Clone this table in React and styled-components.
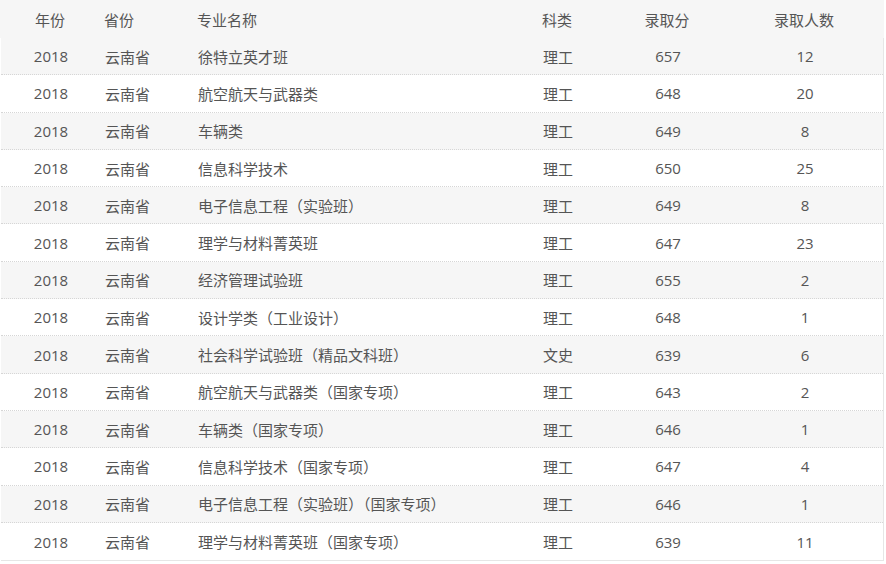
import React from "react";
import styled, { createGlobalStyle } from "styled-components";

const Global = createGlobalStyle`
  html, body { margin: 0; padding: 0; background: #fff; }
  body { font-family: "Open Sans", "Noto Sans CJK SC", sans-serif; }
`;

const Table = styled.div`
  width: 884px;
  font-size: 15px;
  color: #555;
`;

const cols = "100px 93px 345px 72px 114px 160px";

const Header = styled.div`
  display: grid;
  grid-template-columns: ${cols};
  height: 38px;
  align-items: center;
  background: #f6f6f6;
  color: #555;
`;

const Body = styled.div`
  border-left: 1px solid #e6e6e6;
  border-right: 1px solid #e6e6e6;
  border-bottom: 1px solid #e6e6e6;
  margin-left: 1px;
`;

const Row = styled.div`
  display: grid;
  grid-template-columns: ${cols};
  height: 37.3px;
  box-sizing: border-box;
  align-items: center;
  background: ${(p) => (p.$odd ? "#f6f6f6" : "#fff")};
  border-bottom: ${(p) => (p.$last ? "none" : "1px dotted #d6d6d6")};
  margin-left: -1px;
`;

const Cell = styled.div`
  text-align: ${(p) => p.$align || "left"};
  padding-left: ${(p) => (p.$align === "center" ? 0 : 4)}px;
  white-space: nowrap;
`;

const headers = [
  ["年份", "center"],
  ["省份", "left"],
  ["专业名称", "left"],
  ["科类", "left"],
  ["录取分", "center"],
  ["录取人数", "center"],
];

const data = [
  ["徐特立英才班", "理工", 657, 12],
  ["航空航天与武器类", "理工", 648, 20],
  ["车辆类", "理工", 649, 8],
  ["信息科学技术", "理工", 650, 25],
  ["电子信息工程（实验班）", "理工", 649, 8],
  ["理学与材料菁英班", "理工", 647, 23],
  ["经济管理试验班", "理工", 655, 2],
  ["设计学类（工业设计）", "理工", 648, 1],
  ["社会科学试验班（精品文科班）", "文史", 639, 6],
  ["航空航天与武器类（国家专项）", "理工", 643, 2],
  ["车辆类（国家专项）", "理工", 646, 1],
  ["信息科学技术（国家专项）", "理工", 647, 4],
  ["电子信息工程（实验班）（国家专项）", "理工", 646, 1],
  ["理学与材料菁英班（国家专项）", "理工", 639, 11],
];

export default function App() {
  return (
    <>
      <Global />
      <Table>
        <Header>
          {headers.map(([h, a]) => (
            <Cell key={h} $align={a}>{h}</Cell>
          ))}
        </Header>
        <Body>
          {data.map(([name, kind, score, count], i) => (
            <Row key={i} $odd={i % 2 === 0} $last={i === data.length - 1}>
              <Cell $align="center">2018</Cell>
              <Cell>云南省</Cell>
              <Cell>{name}</Cell>
              <Cell>{kind}</Cell>
              <Cell $align="center">{score}</Cell>
              <Cell $align="center">{count}</Cell>
            </Row>
          ))}
        </Body>
      </Table>
    </>
  );
}
